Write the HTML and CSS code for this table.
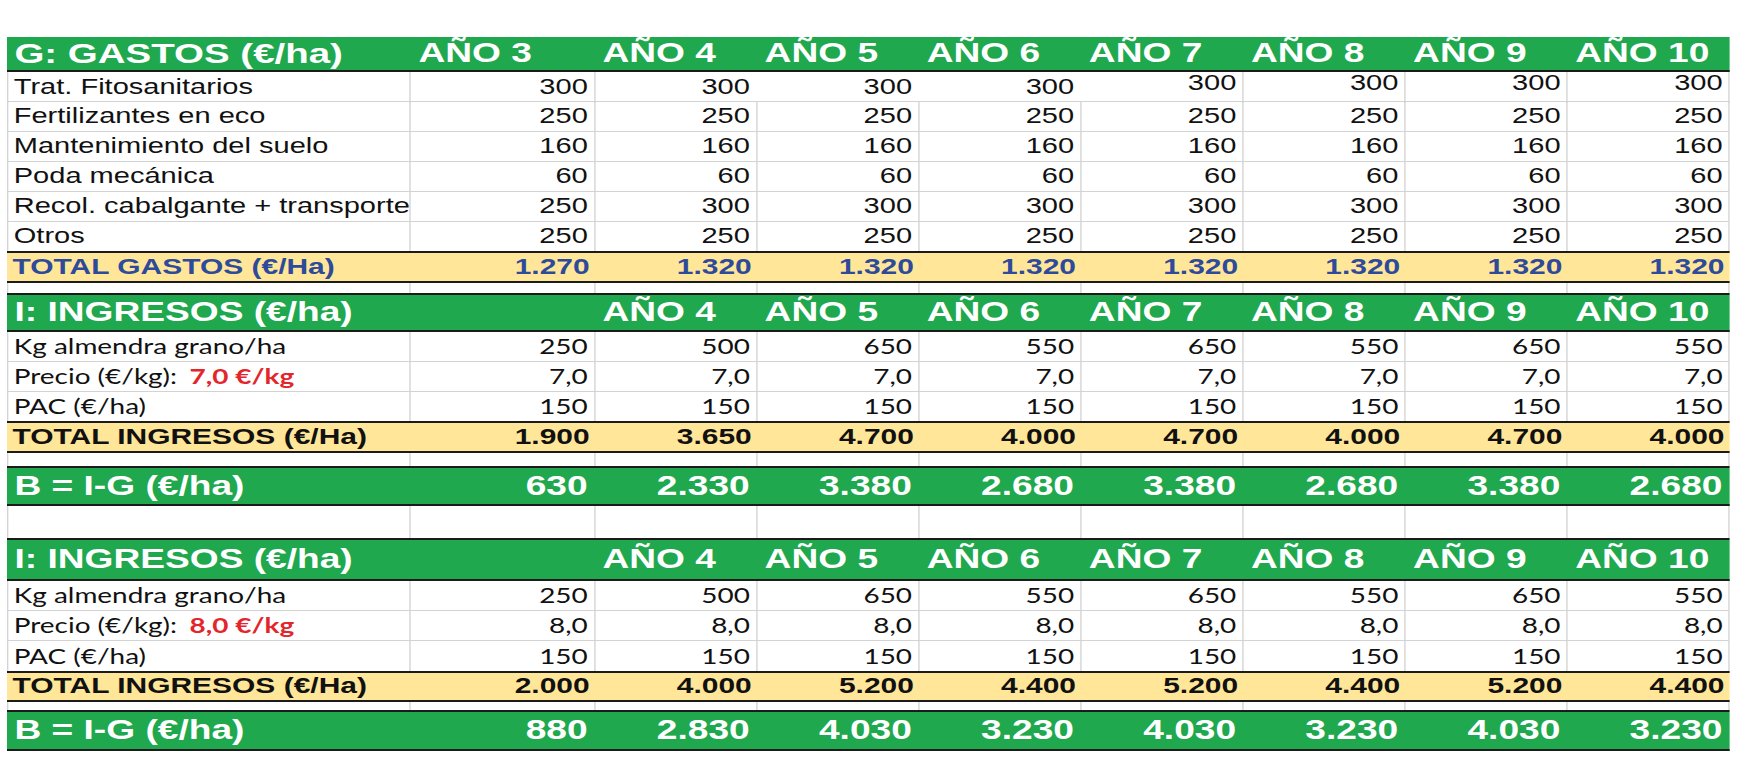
FILE: index.html
```html
<!DOCTYPE html>
<html lang="es">
<head>
<meta charset="utf-8">
<title>Gastos e ingresos</title>
<link rel="stylesheet" href="styles.css">
</head>
<body>
<div class="page">
<div class="sheet">

  <div class="row hd h1">
    <div class="c big">G: GASTOS (€/ha)</div><div class="c">AÑO 3</div><div class="c">AÑO 4</div><div class="c">AÑO 5</div><div class="c">AÑO 6</div><div class="c">AÑO 7</div><div class="c">AÑO 8</div><div class="c">AÑO 9</div><div class="c">AÑO 10</div>
  </div>
  <div class="row grid d gl">
    <div class="c l">Trat. Fitosanitarios</div><div class="c">300</div><div class="c nb">300</div><div class="c nb">300</div><div class="c nb">300</div><div class="c up">300</div><div class="c up">300</div><div class="c up">300</div><div class="c up">300</div>
  </div>
  <div class="row grid d gl">
    <div class="c l">Fertilizantes en eco</div><div class="c">250</div><div class="c">250</div><div class="c">250</div><div class="c">250</div><div class="c">250</div><div class="c">250</div><div class="c">250</div><div class="c">250</div>
  </div>
  <div class="row grid d gl">
    <div class="c l">Mantenimiento del suelo</div><div class="c">160</div><div class="c">160</div><div class="c">160</div><div class="c">160</div><div class="c">160</div><div class="c">160</div><div class="c">160</div><div class="c">160</div>
  </div>
  <div class="row grid d gl">
    <div class="c l">Poda mecánica</div><div class="c">60</div><div class="c">60</div><div class="c">60</div><div class="c">60</div><div class="c">60</div><div class="c">60</div><div class="c">60</div><div class="c">60</div>
  </div>
  <div class="row grid d gl">
    <div class="c l">Recol. cabalgante + transporte</div><div class="c">250</div><div class="c">300</div><div class="c">300</div><div class="c">300</div><div class="c">300</div><div class="c">300</div><div class="c">300</div><div class="c">300</div>
  </div>
  <div class="row grid d gl last g6">
    <div class="c l">Otros</div><div class="c">250</div><div class="c">250</div><div class="c">250</div><div class="c">250</div><div class="c">250</div><div class="c">250</div><div class="c">250</div><div class="c">250</div>
  </div>
  <div class="row tot blue t1">
    <div class="c l">TOTAL GASTOS (€/Ha)</div><div class="c">1.270</div><div class="c">1.320</div><div class="c">1.320</div><div class="c">1.320</div><div class="c">1.320</div><div class="c">1.320</div><div class="c">1.320</div><div class="c">1.320</div>
  </div>
  <div class="row grid sp s1">
    <div class="c"></div><div class="c"></div><div class="c"></div><div class="c"></div><div class="c"></div><div class="c"></div><div class="c"></div><div class="c"></div><div class="c"></div>
  </div>

  <div class="row hd h2">
    <div class="c">I: INGRESOS (€/ha)</div><div class="c"></div><div class="c">AÑO 4</div><div class="c">AÑO 5</div><div class="c">AÑO 6</div><div class="c">AÑO 7</div><div class="c">AÑO 8</div><div class="c">AÑO 9</div><div class="c">AÑO 10</div>
  </div>
  <div class="row grid d ci">
    <div class="c l">Kg almendra grano/ha</div><div class="c">250</div><div class="c">500</div><div class="c">650</div><div class="c">550</div><div class="c">650</div><div class="c">550</div><div class="c">650</div><div class="c">550</div>
  </div>
  <div class="row grid d ci">
    <div class="c l">Precio (€/kg):&nbsp; <b class="red">7,0 €/kg</b></div><div class="c">7,0</div><div class="c">7,0</div><div class="c">7,0</div><div class="c">7,0</div><div class="c">7,0</div><div class="c">7,0</div><div class="c">7,0</div><div class="c">7,0</div>
  </div>
  <div class="row grid d ci last p1">
    <div class="c l">PAC (€/ha)</div><div class="c">150</div><div class="c">150</div><div class="c">150</div><div class="c">150</div><div class="c">150</div><div class="c">150</div><div class="c">150</div><div class="c">150</div>
  </div>
  <div class="row tot t2">
    <div class="c l">TOTAL INGRESOS (€/Ha)</div><div class="c">1.900</div><div class="c">3.650</div><div class="c">4.700</div><div class="c">4.000</div><div class="c">4.700</div><div class="c">4.000</div><div class="c">4.700</div><div class="c">4.000</div>
  </div>
  <div class="row grid sp s2">
    <div class="c"></div><div class="c"></div><div class="c"></div><div class="c"></div><div class="c"></div><div class="c"></div><div class="c"></div><div class="c"></div><div class="c"></div>
  </div>
  <div class="row bb b1">
    <div class="c l">B = I-G (€/ha)</div><div class="c">630</div><div class="c">2.330</div><div class="c">3.380</div><div class="c">2.680</div><div class="c">3.380</div><div class="c">2.680</div><div class="c">3.380</div><div class="c">2.680</div>
  </div>
  <div class="row grid sp s3">
    <div class="c"></div><div class="c"></div><div class="c"></div><div class="c"></div><div class="c"></div><div class="c"></div><div class="c"></div><div class="c"></div><div class="c"></div>
  </div>

  <div class="row hd h3">
    <div class="c">I: INGRESOS (€/ha)</div><div class="c"></div><div class="c">AÑO 4</div><div class="c">AÑO 5</div><div class="c">AÑO 6</div><div class="c">AÑO 7</div><div class="c">AÑO 8</div><div class="c">AÑO 9</div><div class="c">AÑO 10</div>
  </div>
  <div class="row grid d ci">
    <div class="c l">Kg almendra grano/ha</div><div class="c">250</div><div class="c">500</div><div class="c">650</div><div class="c">550</div><div class="c">650</div><div class="c">550</div><div class="c">650</div><div class="c">550</div>
  </div>
  <div class="row grid d ci">
    <div class="c l">Precio (€/kg):&nbsp; <b class="red">8,0 €/kg</b></div><div class="c">8,0</div><div class="c">8,0</div><div class="c">8,0</div><div class="c">8,0</div><div class="c">8,0</div><div class="c">8,0</div><div class="c">8,0</div><div class="c">8,0</div>
  </div>
  <div class="row grid d ci last p2">
    <div class="c l">PAC (€/ha)</div><div class="c">150</div><div class="c">150</div><div class="c">150</div><div class="c">150</div><div class="c">150</div><div class="c">150</div><div class="c">150</div><div class="c">150</div>
  </div>
  <div class="row tot t3">
    <div class="c l">TOTAL INGRESOS (€/Ha)</div><div class="c">2.000</div><div class="c">4.000</div><div class="c">5.200</div><div class="c">4.400</div><div class="c">5.200</div><div class="c">4.400</div><div class="c">5.200</div><div class="c">4.400</div>
  </div>
  <div class="row grid sp s4">
    <div class="c"></div><div class="c"></div><div class="c"></div><div class="c"></div><div class="c"></div><div class="c"></div><div class="c"></div><div class="c"></div><div class="c"></div>
  </div>
  <div class="row bb b2">
    <div class="c l">B = I-G (€/ha)</div><div class="c">880</div><div class="c">2.830</div><div class="c">4.030</div><div class="c">3.230</div><div class="c">4.030</div><div class="c">3.230</div><div class="c">4.030</div><div class="c">3.230</div>
  </div>

</div>
</div>
</body>
</html>
```

FILE: styles.css
```css
* { box-sizing: border-box; }

html, body {
  margin: 0;
  padding: 0;
  background: #ffffff;
}

body {
  width: 1750px;
  height: 765px;
  overflow: hidden;
  font-family: "Liberation Sans", Arial, sans-serif;
  color: #111111;
}

.page {
  padding: 37px 0 0 7px;
}

/* the source image is horizontally stretched: draw at natural width, then stretch */
.sheet {
  width: 1276.3px;
  transform: scaleX(1.35);
  transform-origin: 0 0;
}

.row {
  display: grid;
  grid-template-columns: 299.3px 136.3px repeat(7, 120.1px);
}

.c {
  display: flex;
  align-items: center;
  justify-content: flex-end;
  padding: 0 4.4px 0 4px;
  white-space: nowrap;
  line-height: 1.1;
  min-width: 0;
}

.c.l {
  justify-content: flex-start;
}

/* grid lines */
.grid .c {
  border-right: 1px solid #d3d3d3;
}

.grid .c:first-child {
  border-left: 1px solid #d3d3d3;
}

.grid .c.nb {
  border-right-color: transparent;
}

.c.up {
  padding-bottom: 7px;
}

/* green header rows */
.hd {
  background: #1fa84e;
  color: #ffffff;
  font-weight: bold;
  font-size: 27.5px;
  border-bottom: 2px solid #1b1b1b;
}

.hd .c {
  justify-content: flex-start;
  padding: 0 0 0 5.5px;
}

.hd .c.big {
  font-size: 28.5px;
}

.h1 { height: 35px; }
.h2 { height: 37px; }
.h3 { height: 41px; }

/* data rows */
.d {
  height: 30px;
  font-size: 21.5px;
  border-bottom: 1px solid #d3d3d3;
}

.d.last {
  border-bottom: 0;
  height: 29px;
}

.d.ci {
  font-family: Lato, "Liberation Sans", sans-serif;
  font-size: 20.7px;
}

.d.ci.p2 { height: 30px; }

.red {
  color: #e3262b;
  font-weight: bold;
  margin-left: 4px;
}

/* totals */
.tot {
  background: #ffe699;
  font-weight: bold;
  font-size: 22.2px;
  border-top: 2px solid #1b1b1b;
  border-bottom: 2px solid #1b1b1b;
  height: 32px;
}

.tot .c {
  padding-right: 4px;
}

.tot.blue {
  color: #2e4a9a;
}

.t3 { height: 31px; }

/* spacer rows */
.sp {
  border-bottom: 2px solid #1b1b1b;
}

.s1 { height: 12px; }
.s2 { height: 15px; }
.s3 { height: 34px; }
.s4 { height: 10px; }

/* result rows */
.bb {
  background: #1fa84e;
  color: #ffffff;
  font-weight: bold;
  font-size: 27.5px;
  border-bottom: 2px solid #1b1b1b;
  height: 38px;
}

.bb .c {
  padding-right: 5.5px;
}

.bb .c.l {
  padding-left: 5.5px;
}

.b2 { height: 39px; }
```
